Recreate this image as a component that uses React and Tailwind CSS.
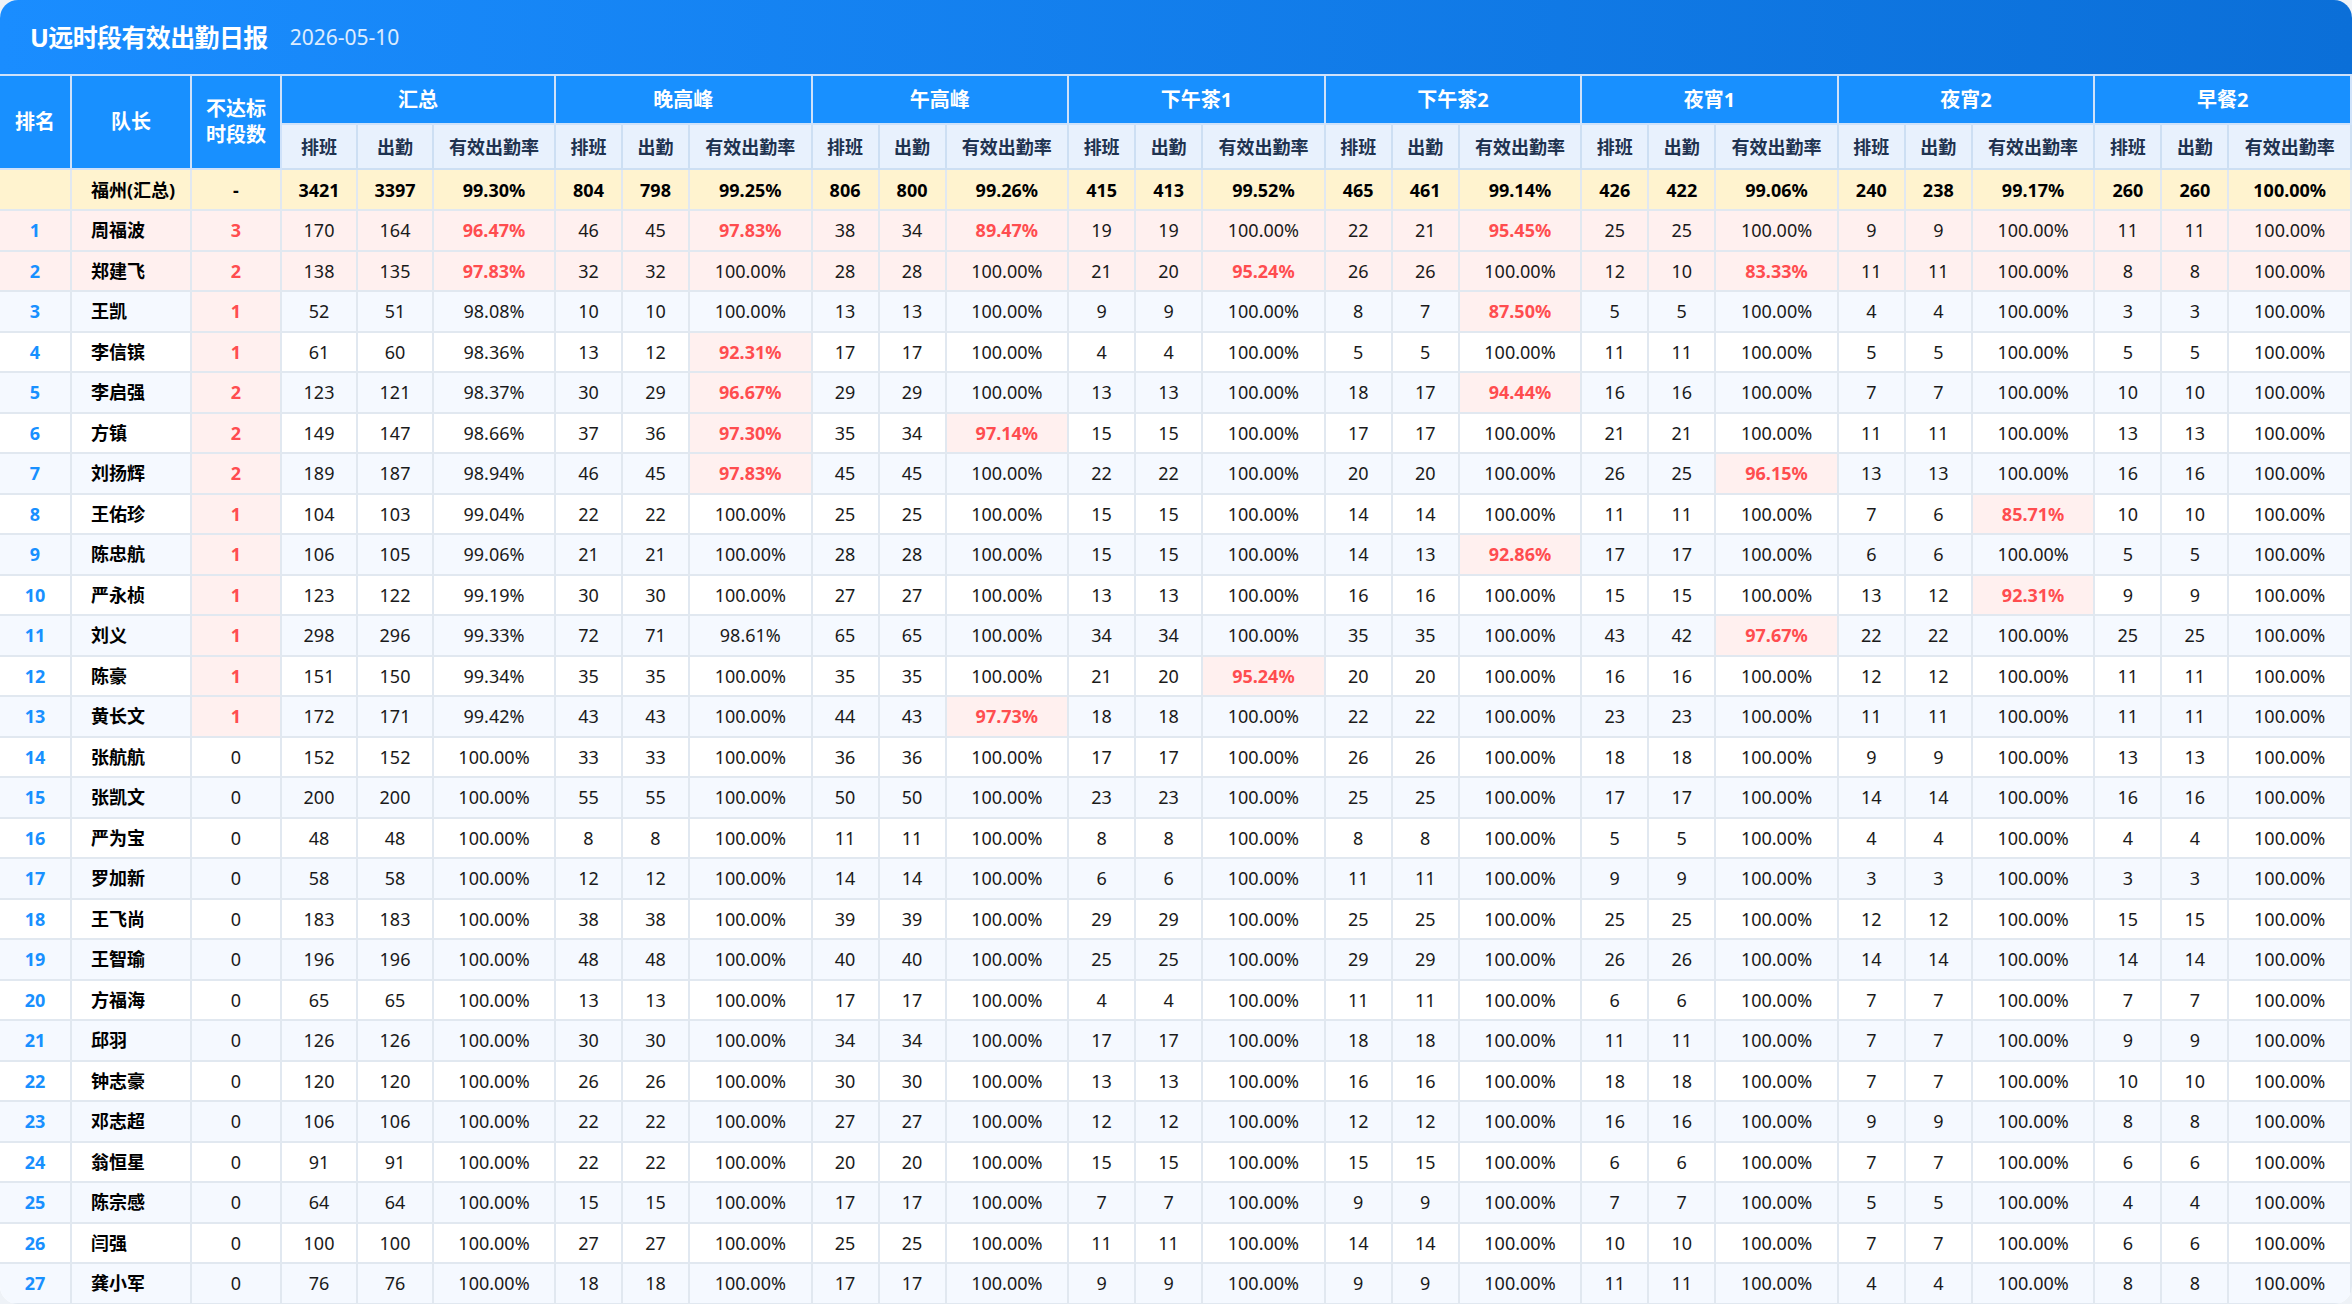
import React from 'react'

const groups = ['汇总', '晚高峰', '午高峰', '下午茶1', '下午茶2', '夜宵1', '夜宵2', '早餐2']

// name, 不达标时段数, [排班, 出勤] x 8 (汇总 first)
const total = ['福州(汇总)', '-', [3421, 3397, 804, 798, 806, 800, 415, 413, 465, 461, 426, 422, 240, 238, 260, 260]]

const rows = [
  ['周福波', 3, [170, 164, 46, 45, 38, 34, 19, 19, 22, 21, 25, 25, 9, 9, 11, 11]],
  ['郑建飞', 2, [138, 135, 32, 32, 28, 28, 21, 20, 26, 26, 12, 10, 11, 11, 8, 8]],
  ['王凯', 1, [52, 51, 10, 10, 13, 13, 9, 9, 8, 7, 5, 5, 4, 4, 3, 3]],
  ['李信镔', 1, [61, 60, 13, 12, 17, 17, 4, 4, 5, 5, 11, 11, 5, 5, 5, 5]],
  ['李启强', 2, [123, 121, 30, 29, 29, 29, 13, 13, 18, 17, 16, 16, 7, 7, 10, 10]],
  ['方镇', 2, [149, 147, 37, 36, 35, 34, 15, 15, 17, 17, 21, 21, 11, 11, 13, 13]],
  ['刘扬辉', 2, [189, 187, 46, 45, 45, 45, 22, 22, 20, 20, 26, 25, 13, 13, 16, 16]],
  ['王佑珍', 1, [104, 103, 22, 22, 25, 25, 15, 15, 14, 14, 11, 11, 7, 6, 10, 10]],
  ['陈忠航', 1, [106, 105, 21, 21, 28, 28, 15, 15, 14, 13, 17, 17, 6, 6, 5, 5]],
  ['严永桢', 1, [123, 122, 30, 30, 27, 27, 13, 13, 16, 16, 15, 15, 13, 12, 9, 9]],
  ['刘义', 1, [298, 296, 72, 71, 65, 65, 34, 34, 35, 35, 43, 42, 22, 22, 25, 25]],
  ['陈豪', 1, [151, 150, 35, 35, 35, 35, 21, 20, 20, 20, 16, 16, 12, 12, 11, 11]],
  ['黄长文', 1, [172, 171, 43, 43, 44, 43, 18, 18, 22, 22, 23, 23, 11, 11, 11, 11]],
  ['张航航', 0, [152, 152, 33, 33, 36, 36, 17, 17, 26, 26, 18, 18, 9, 9, 13, 13]],
  ['张凯文', 0, [200, 200, 55, 55, 50, 50, 23, 23, 25, 25, 17, 17, 14, 14, 16, 16]],
  ['严为宝', 0, [48, 48, 8, 8, 11, 11, 8, 8, 8, 8, 5, 5, 4, 4, 4, 4]],
  ['罗加新', 0, [58, 58, 12, 12, 14, 14, 6, 6, 11, 11, 9, 9, 3, 3, 3, 3]],
  ['王飞尚', 0, [183, 183, 38, 38, 39, 39, 29, 29, 25, 25, 25, 25, 12, 12, 15, 15]],
  ['王智瑜', 0, [196, 196, 48, 48, 40, 40, 25, 25, 29, 29, 26, 26, 14, 14, 14, 14]],
  ['方福海', 0, [65, 65, 13, 13, 17, 17, 4, 4, 11, 11, 6, 6, 7, 7, 7, 7]],
  ['邱羽', 0, [126, 126, 30, 30, 34, 34, 17, 17, 18, 18, 11, 11, 7, 7, 9, 9]],
  ['钟志豪', 0, [120, 120, 26, 26, 30, 30, 13, 13, 16, 16, 18, 18, 7, 7, 10, 10]],
  ['邓志超', 0, [106, 106, 22, 22, 27, 27, 12, 12, 12, 12, 16, 16, 9, 9, 8, 8]],
  ['翁恒星', 0, [91, 91, 22, 22, 20, 20, 15, 15, 15, 15, 6, 6, 7, 7, 6, 6]],
  ['陈宗感', 0, [64, 64, 15, 15, 17, 17, 7, 7, 9, 9, 7, 7, 5, 5, 4, 4]],
  ['闫强', 0, [100, 100, 27, 27, 25, 25, 11, 11, 14, 14, 10, 10, 7, 7, 6, 6]],
  ['龚小军', 0, [76, 76, 18, 18, 17, 17, 9, 9, 9, 9, 11, 11, 4, 4, 8, 8]],
]

const rate = (s, a) => (s ? (a / s) * 100 : 0)
const fmt = v => v.toFixed(2) + '%'

const headBlue = 'bg-[#1890ff] text-white font-bold text-[20px] border-2 border-[#cfe2fa]'
const subHead = 'bg-[#e8f1fd] text-[#1f3350] font-bold text-[18px] border-2 border-[#cddff3]'
const cell = 'border-2 border-[#e1e8f0] text-center'

export default function App() {
  return (
    <div
      className="w-[2352px] h-[1304px] bg-[#eef2f7] overflow-hidden"
      style={{ fontFamily: "'Noto Sans', 'Noto Sans CJK SC', sans-serif" }}
    >
      <div className="h-full bg-white rounded-[18px] overflow-hidden flex flex-col">
        {/* Title bar */}
        <div className="h-[76px] shrink-0 flex items-center gap-[22px] pl-[30px] pt-[2px] bg-gradient-to-r from-[#1a8dff] to-[#0b6fd8] border-b-2 border-[#cfe2fa]">
          <span className="text-white font-bold text-[25px] tracking-tight">U远时段有效出勤日报</span>
          <span className="text-white/85 text-[21px]">2026-05-10</span>
        </div>

        <table className="w-full table-fixed border-collapse text-[18px] text-[#1a1a1a] leading-none">
          <colgroup>
            <col className="w-[71px]" />
            <col className="w-[120px]" />
            <col className="w-[90px]" />
            <col className="w-[76px]" />
            <col className="w-[76px]" />
            <col className="w-[122px]" />
            {groups.slice(1).map(g => (
              <React.Fragment key={g}>
                <col className="w-[67px]" />
                <col className="w-[67px]" />
                <col />
              </React.Fragment>
            ))}
          </colgroup>
          <thead>
            <tr className="h-[48px]">
              <th rowSpan={2} className={`${headBlue} border-t-0 border-l-0`}>排名</th>
              <th rowSpan={2} className={`${headBlue} border-t-0`}>队长</th>
              <th rowSpan={2} className={`${headBlue} border-t-0 leading-[1.3]`}>
                不达标<br />时段数
              </th>
              {groups.map(g => (
                <th key={g} colSpan={3} className={`${headBlue} border-t-0`}>{g}</th>
              ))}
            </tr>
            <tr className="h-[45px]">
              {groups.map(g => (
                <React.Fragment key={g}>
                  <th className={subHead}>排班</th>
                  <th className={subHead}>出勤</th>
                  <th className={subHead}>有效出勤率</th>
                </React.Fragment>
              ))}
            </tr>
          </thead>
          <tbody>
            <tr className="h-[41px] bg-[#fff3cf] font-bold text-black">
              <td className={`${cell} border-l-0`}></td>
              <td className={`${cell} text-left pl-[19px]`}>{total[0]}</td>
              <td className={cell}>{total[1]}</td>
              {groups.map((g, i) => {
                const s = total[2][i * 2]
                const a = total[2][i * 2 + 1]
                return (
                  <React.Fragment key={g}>
                    <td className={cell}>{s}</td>
                    <td className={cell}>{a}</td>
                    <td className={cell}>{fmt(rate(s, a))}</td>
                  </React.Fragment>
                )
              })}
            </tr>
            {rows.map(([name, miss, nums], idx) => {
              const sumRate = rate(nums[0], nums[1])
              const rowBg = sumRate < 98 ? 'bg-[#fff0ef]' : idx % 2 === 0 ? 'bg-[#f5f9ff]' : 'bg-white'
              return (
                <tr key={name} className={`h-[40.5px] ${rowBg}`}>
                  <td className={`${cell} border-l-0 text-[#1890ff] font-bold`}>{idx + 1}</td>
                  <td className={`${cell} text-left pl-[19px] font-bold text-black`}>{name}</td>
                  <td className={`${cell} ${miss > 0 ? 'bg-[#fff0ef] text-[#ff4d4f] font-bold' : ''}`}>{miss}</td>
                  {groups.map((g, i) => {
                    const s = nums[i * 2]
                    const a = nums[i * 2 + 1]
                    const r = rate(s, a)
                    const bad = r < 98
                    return (
                      <React.Fragment key={g}>
                        <td className={cell}>{s}</td>
                        <td className={cell}>{a}</td>
                        <td className={`${cell} ${bad ? 'bg-[#fff0ef] text-[#ff4d4f] font-bold' : ''}`}>{fmt(r)}</td>
                      </React.Fragment>
                    )
                  })}
                </tr>
              )
            })}
          </tbody>
        </table>
      </div>
    </div>
  )
}
